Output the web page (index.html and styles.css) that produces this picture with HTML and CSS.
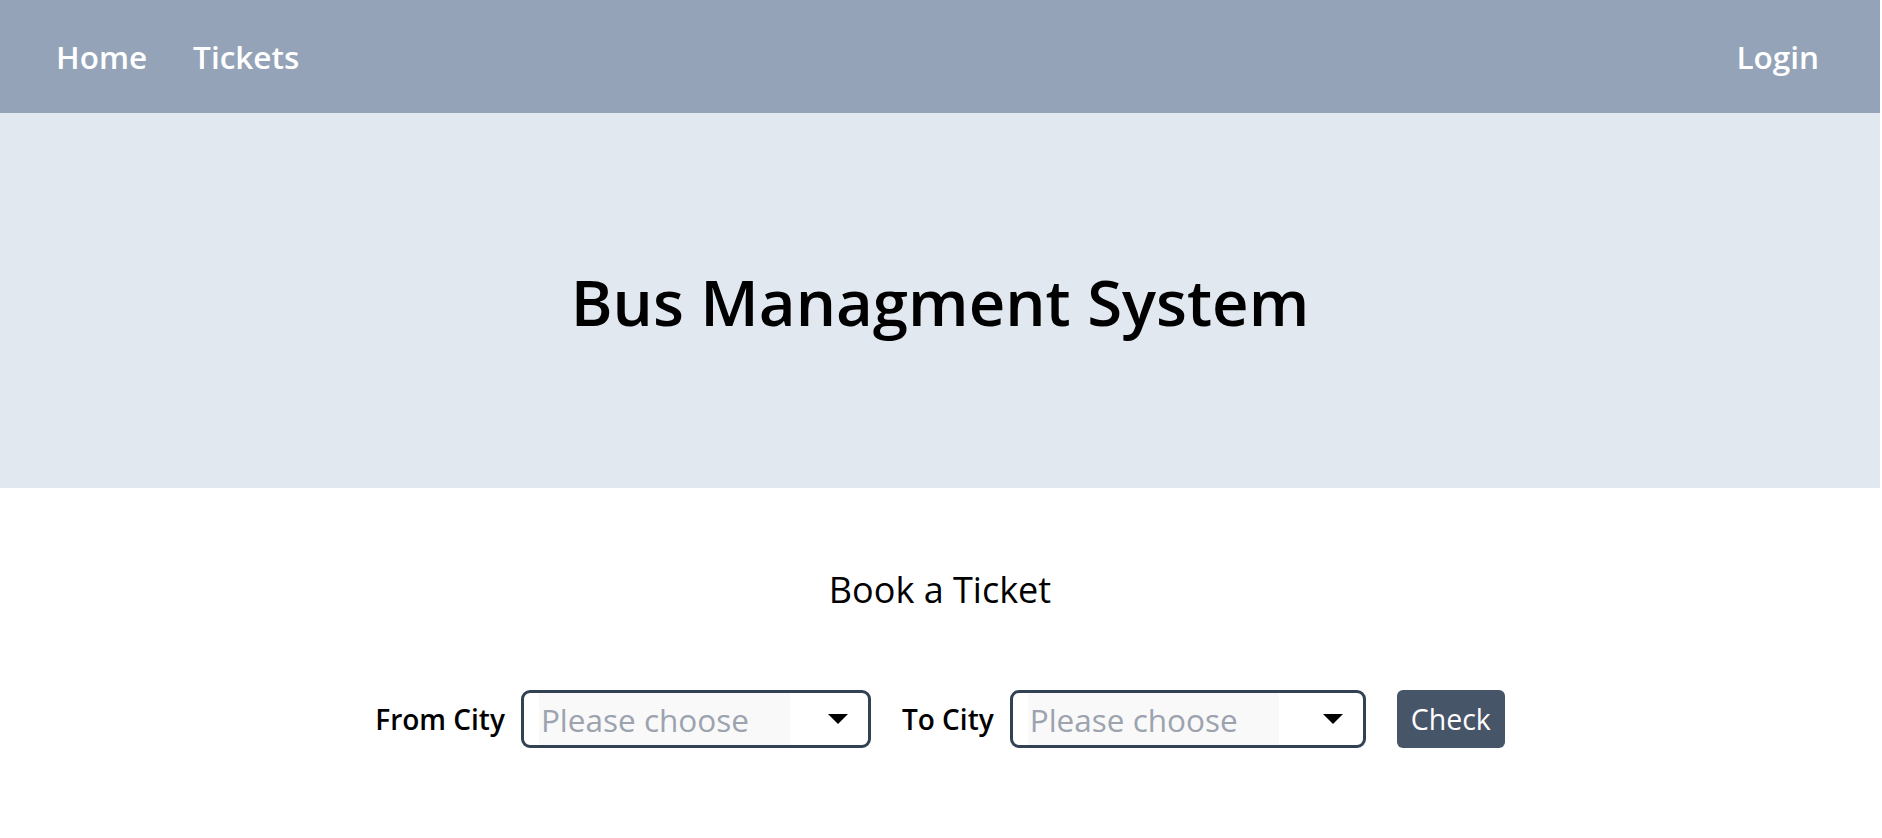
FILE: index.html
```html
<!DOCTYPE html>
<html lang="en">
<head>
<meta charset="utf-8">
<title>Bus Managment System</title>
<link rel="stylesheet" href="styles.css">
</head>
<body>
<div class="page">
  <nav class="navbar">
    <div class="nav-left">
      <a class="nav-link" href="#">Home</a>
      <a class="nav-link" href="#">Tickets</a>
    </div>
    <a class="nav-link" href="#">Login</a>
  </nav>
  <header class="hero">
    <h1 class="hero-title">Bus Managment System</h1>
  </header>
  <main class="booking">
    <h2 class="booking-title">Book a Ticket</h2>
    <form class="booking-form">
      <div class="field">
        <label class="field-label">From City</label>
        <div class="select select-from">
          <span class="select-input">Please choose</span>
          <svg class="select-arrow" width="20" height="10" viewBox="0 0 20 10"><path d="M0 0H20L10 10Z" fill="#000"/></svg>
        </div>
      </div>
      <div class="field">
        <label class="field-label">To City</label>
        <div class="select select-to">
          <span class="select-input">Please choose</span>
          <svg class="select-arrow" width="20" height="10" viewBox="0 0 20 10"><path d="M0 0H20L10 10Z" fill="#000"/></svg>
        </div>
      </div>
      <button type="button" class="btn-check">Check</button>
    </form>
  </main>
</div>
</body>
</html>
```

FILE: styles.css
```css
* { box-sizing: border-box; }
html, body { margin: 0; padding: 0; background: #fff; }
body {
  font-family: "Open Sans", "Noto Sans", sans-serif;
  color: #000;
}
.page { margin-right: 2px; }

.navbar {
  height: 113px;
  background: #94a3b8;
  display: flex;
  align-items: center;
  justify-content: space-between;
  padding: 0 61px 0 56px;
}
.nav-left { display: flex; gap: 46px; }
.nav-link {
  color: #fff;
  text-decoration: none;
  font-size: 31.5px;
  font-weight: 600;
  line-height: 1.2;
}

.hero {
  height: 375px;
  background: #e2e8f0;
  display: flex;
  align-items: center;
  justify-content: center;
  padding-top: 4px;
}
.hero-title {
  margin: 0;
  font-size: 63.5px;
  font-weight: 600;
  line-height: 1.2;
}

.booking {
  display: flex;
  flex-direction: column;
  align-items: center;
  padding-top: 80px;
}
.booking-title {
  margin: 0;
  font-size: 36px;
  font-weight: 400;
  line-height: 1.2;
}
.booking-form {
  margin-top: 79px;
  display: flex;
  align-items: center;
  gap: 31px;
}
.field { display: flex; align-items: center; gap: 16px; }
.field-label {
  font-size: 28px;
  font-weight: 600;
}
.select {
  height: 58px;
  border: 3px solid #334155;
  border-radius: 9px;
  display: flex;
  align-items: stretch;
  justify-content: space-between;
  padding: 0 20px 0 15px;
}
.select-from { width: 350px; }
.select-to { width: 356px; }
.select-input {
  width: 251px;
  background: #f9f9f9;
  color: #9ca3af;
  font-size: 31.5px;
  display: flex;
  align-items: center;
  padding-left: 2px;
  white-space: nowrap;
}
.select-arrow { align-self: center; }
.btn-check {
  height: 58px;
  padding: 0 14px;
  background: #475569;
  color: #fff;
  border: 0;
  border-radius: 6px;
  font-family: inherit;
  font-size: 28.5px;
}
```
